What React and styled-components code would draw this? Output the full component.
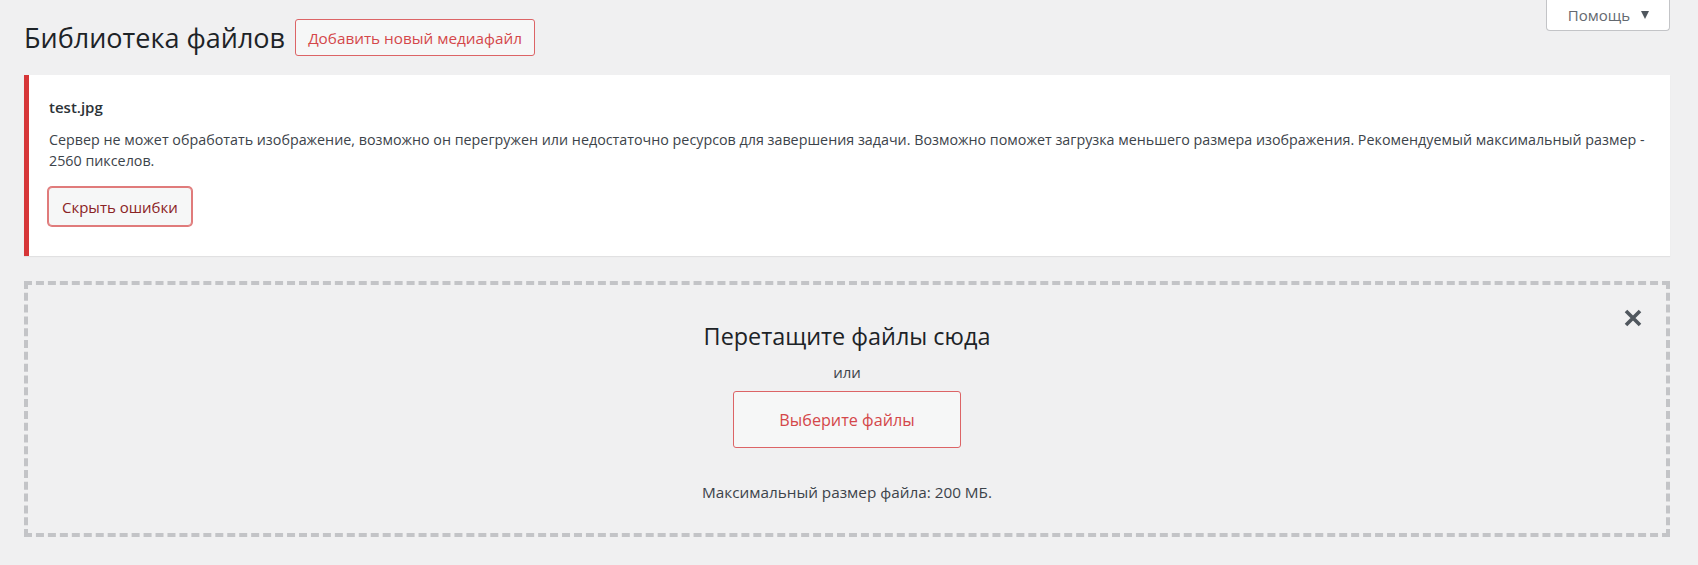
import React from "react";
import styled, { createGlobalStyle } from "styled-components";

const GlobalStyle = createGlobalStyle`
    html, body {
        margin: 0;
        padding: 0;
        background: #f0f0f1;
    }
    body {
        font-family: "Open Sans", "Noto Sans", sans-serif;
        color: #3c434a;
    }
`;

//!styles----------------------------------------------
const Page = styled.div`
    padding: 0 28px 40px 24px;
`;

const Header = styled.div`
    display: flex;
    justify-content: space-between;
    align-items: flex-start;
    height: 75px;
`;

const TitleRow = styled.div`
    display: flex;
    align-items: center;
    gap: 10px;
    padding-top: 19px;
`;

const Title = styled.h1`
    margin: 0;
    font-size: 27px;
    font-weight: 400;
    line-height: 37px;
    color: #1d2327;
`;

const OutlineButton = styled.button`
    font-family: inherit;
    font-size: ${(p) => p.$size || 15}px;
    height: ${(p) => p.$height || 37}px;
    padding: 0 ${(p) => p.$pad || 12}px;
    color: #d4474a;
    background: #f6f7f7;
    border: 1px solid #dc6466;
    border-radius: 3px;
    cursor: pointer;
`;

const HelpTab = styled.button`
    display: flex;
    align-items: center;
    gap: 11px;
    height: 32px;
    margin-top: -1px;
    padding: 0 20px 0 21px;
    font-family: inherit;
    font-size: 15px;
    color: #646970;
    background: #fff;
    border: 1px solid #c3c4c7;
    border-top: none;
    border-radius: 0 0 4px 4px;
`;

const Caret = styled.span`
    width: 0;
    height: 0;
    border-left: 4.5px solid transparent;
    border-right: 4.5px solid transparent;
    border-top: 8px solid #50575e;
`;

const Notice = styled.div`
    background: #fff;
    border-left: 5px solid #d63638;
    box-shadow: 0 1px 1px rgba(0, 0, 0, 0.06);
    padding: 22px 16px 30px 20px;
`;

const FileName = styled.div`
    font-size: 15px;
    font-weight: 600;
    line-height: 21px;
    color: #2c3338;
`;

const Message = styled.p`
    margin: 11px 0 16px;
    font-size: 14.3px;
    line-height: 21px;
    color: #3c434a;
`;

const DismissButton = styled.button`
    height: 39px;
    padding: 0 13px;
    font-family: inherit;
    font-size: 15px;
    color: #8a2424;
    background: #f6f7f7;
    border: 1px solid #e07b7b;
    box-shadow: 0 0 0 1px #e07b7b;
    border-radius: 4px;
    margin-left: -1px;
`;

const DropZone = styled.div`
    position: relative;
    margin-top: 25px;
    height: 256px;
    box-sizing: border-box;
    border: 4px dashed #c3c4c7;
    display: flex;
    flex-direction: column;
    align-items: center;
    padding-top: 37px;
`;

const DropTitle = styled.h2`
    margin: 0;
    font-size: 23.4px;
    font-weight: 400;
    line-height: 28px;
    color: #1d2327;
`;

const Or = styled.p`
    margin: 12px 0 8px;
    font-size: 15px;
    line-height: 21px;
    color: #3c434a;
`;

const MaxSize = styled.p`
    margin: 34px 0 0;
    font-size: 15.3px;
    line-height: 21px;
    color: #3c434a;
`;

const CloseButton = styled.button`
    position: absolute;
    top: 22px;
    right: 22px;
    width: 22px;
    height: 22px;
    padding: 0;
    border: none;
    background: none;
    display: flex;
    align-items: center;
    justify-content: center;
    cursor: pointer;
`;

const CloseIcon = () => (
    <svg width="18" height="18" viewBox="0 0 18 18">
        <path
            d="M2 2L16 16M16 2L2 16"
            stroke="#50575e"
            strokeWidth="3.6"
            strokeLinecap="butt"
        />
    </svg>
);

const App = () => {
    return (
        <Page>
            <GlobalStyle />
            <Header>
                <TitleRow>
                    <Title>Библиотека файлов</Title>
                    <OutlineButton $size={15.3}>Добавить новый медиафайл</OutlineButton>
                </TitleRow>
                <HelpTab>
                    Помощь
                    <Caret />
                </HelpTab>
            </Header>
            <Notice>
                <FileName>test.jpg</FileName>
                <Message>
                    Сервер не может обработать изображение, возможно он перегружен или
                    недостаточно ресурсов для завершения задачи. Возможно поможет загрузка
                    меньшего размера изображения. Рекомендуемый максимальный размер - 2560
                    пикселов.
                </Message>
                <DismissButton>Скрыть ошибки</DismissButton>
            </Notice>
            <DropZone>
                <CloseButton aria-label="Закрыть">
                    <CloseIcon />
                </CloseButton>
                <DropTitle>Перетащите файлы сюда</DropTitle>
                <Or>или</Or>
                <OutlineButton $size={16.2} $height={57} $pad={45}>
                    Выберите файлы
                </OutlineButton>
                <MaxSize>Максимальный размер файла: 200 МБ.</MaxSize>
            </DropZone>
        </Page>
    );
};

export default App;
